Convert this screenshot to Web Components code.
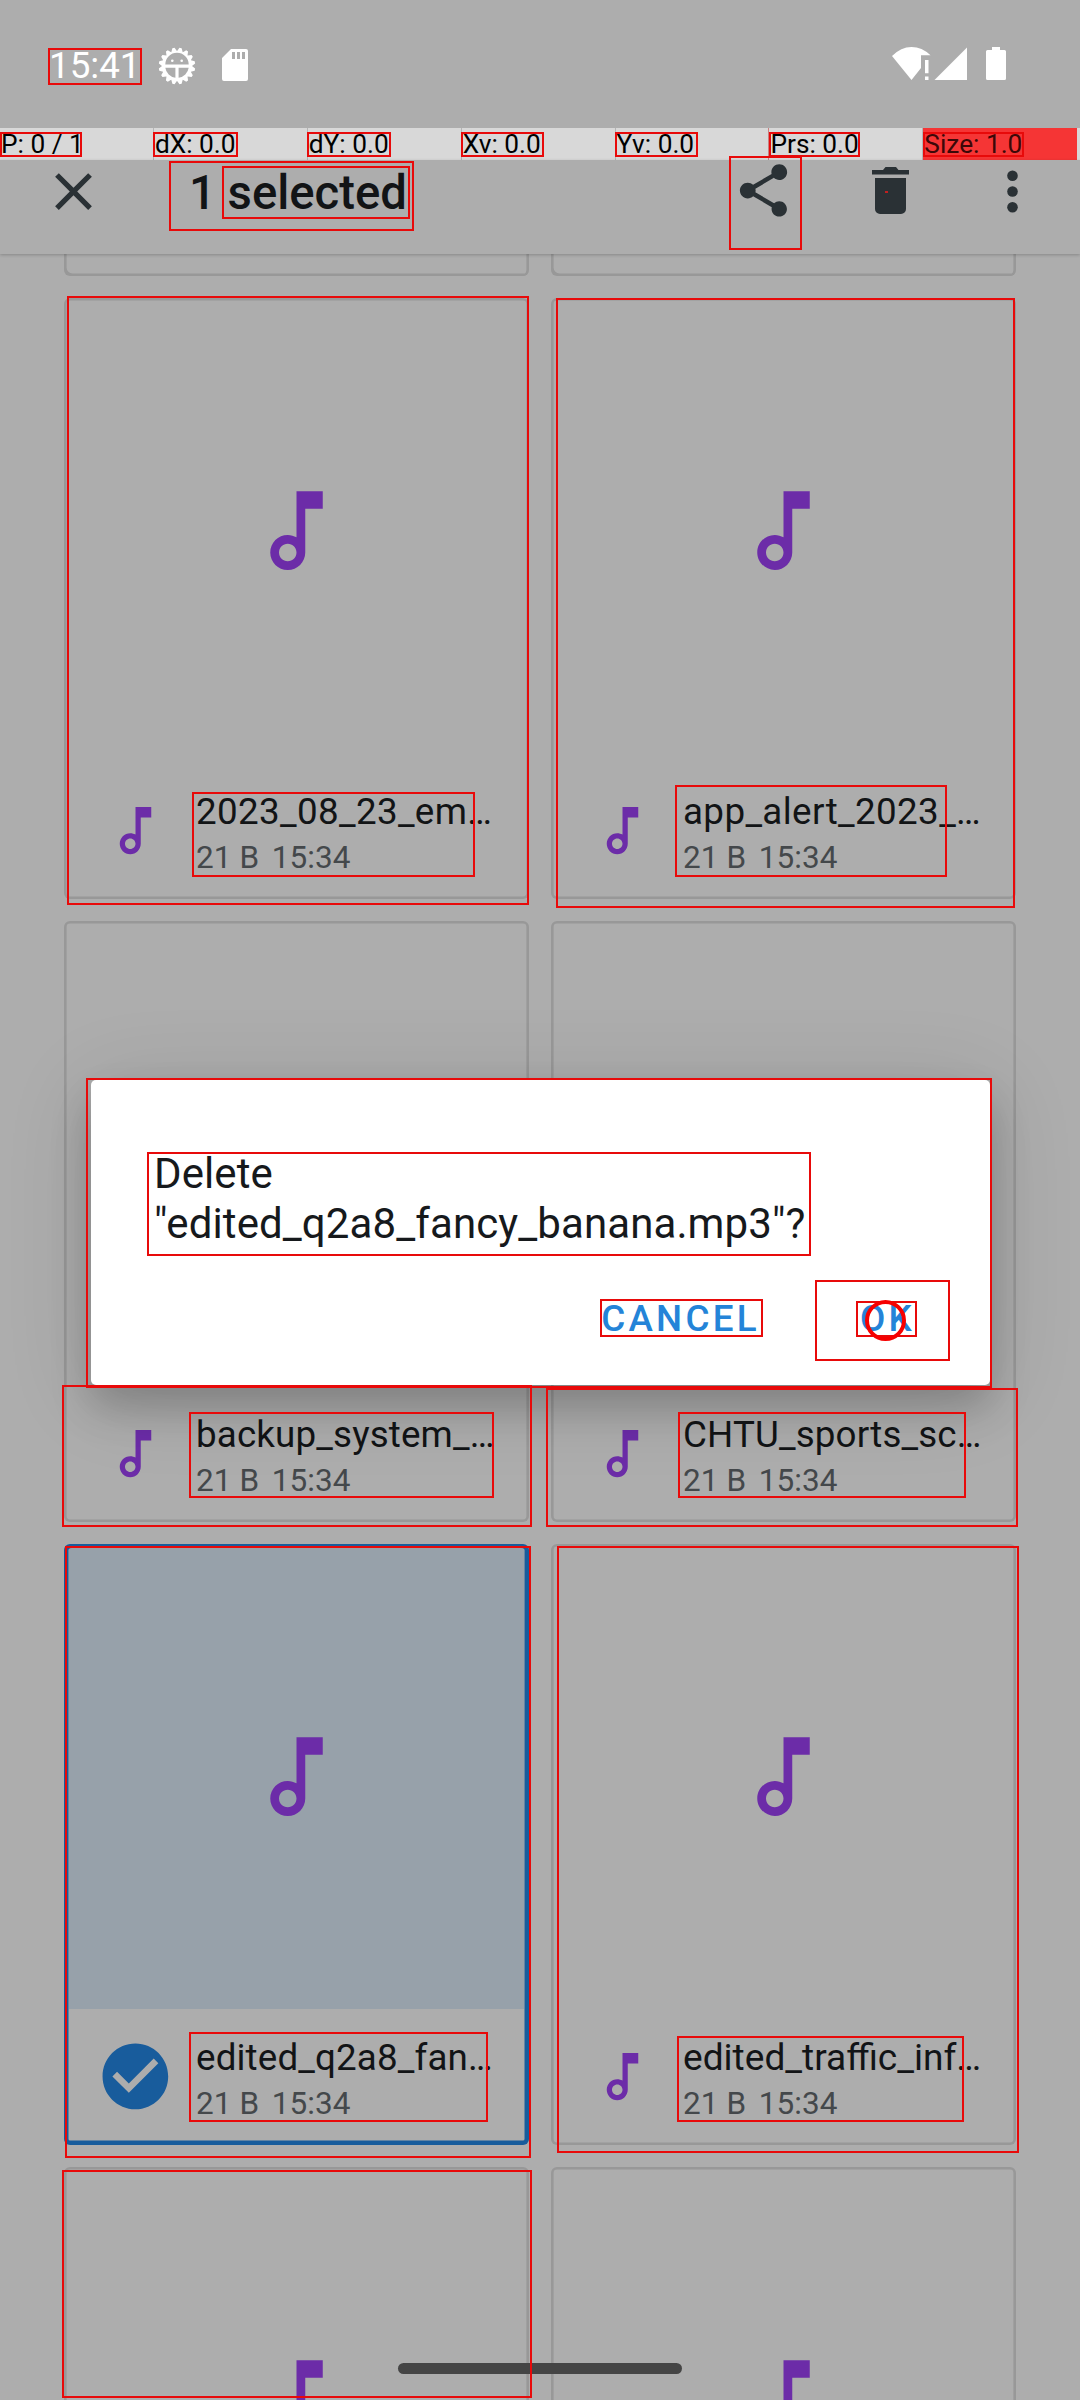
<!DOCTYPE html>
<html lang="en">
<head>
<meta charset="utf-8">
<title>Files</title>
<style>
html,body{margin:0;padding:0;width:1080px;height:2400px;overflow:hidden;background:#adadad}
</style>
</head>
<body>
<files-screen></files-screen>
<script>
const define = (name, html, ready) => {
  const t = document.createElement('template');
  t.innerHTML = html;
  customElements.define(name, class extends HTMLElement {
    connectedCallback() {
      if (this.shadowRoot) return;
      const root = this.attachShadow({ mode: 'open' });
      root.append(t.content.cloneNode(true));
      if (ready) ready(this, root);
    }
  });
};

define('status-bar', `
<style>
:host{display:flex;height:128px;box-sizing:border-box;padding:47px 74px 0 49px;align-items:flex-start;color:#fff}
.time{font-size:36.750px;line-height:38px;width:109px;margin-top:-.500px;white-space:nowrap}
svg{display:block;fill:#fff;flex:none}
.sp{flex:1}
</style>
<span class="time">15:41</span>
<svg class="gear" width="38" height="38" viewBox="-19 -19 38 38"></svg>
<svg style="margin:2px 0 0 26px" width="26" height="32" viewBox="0 0 26 32"><path fill-rule="evenodd" d="M9 0H24a2 2 0 0 1 2 2V30a2 2 0 0 1-2 2H2a2 2 0 0 1-2-2V9ZM10 3v7h3V3ZM15 3v7h3V3ZM20 3v7h3V3Z"/></svg>
<span class="sp"></span>
<svg width="114" height="33" viewBox="892 47 114 33">
<path d="M892 56Q901 47 911.500 47Q922 47 930.500 55.300H921V68L911.500 80Z"/>
<path d="M925 60h3.500v13.300h-3.500zM925 76.500h3.500v3.500h-3.500z"/>
<path d="M967 47.500V80H934.500Z"/>
<path d="M992 47h8v3h4.500a1.500 1.500 0 0 1 1.500 1.500V78.500a1.500 1.500 0 0 1-1.500 1.500H987.500a1.500 1.500 0 0 1-1.500-1.500V51.500a1.500 1.500 0 0 1 1.500-1.500H992Z"/>
</svg>`, (el, root) => {
  let d = '';
  const n = 16;
  for (let i = 0; i < n; i++) {
    const a = (i + .5) * 2 * Math.PI / n;
    const p = (r, o) => (r * Math.cos(a + o)).toFixed(2) + ' ' + (r * Math.sin(a + o)).toFixed(2);
    d += (i ? 'L' : 'M') + p(15, -.19) + 'L' + p(18.3, -.06) + 'L' + p(18.3, .06) + 'L' + p(15, .19);
  }
  root.querySelector('.gear').innerHTML =
    `<path fill-rule="evenodd" d="${d}ZM-11.700 -1.500A11.700 11.700 0 0 1 11.700 -1.500ZM-11.700 1.800H-1.600V11.700A11.700 11.700 0 0 1 -11.700 1.800ZM1.600 1.800H11.700A11.700 11.700 0 0 1 1.600 11.700Z"/><circle cx="-4.700" cy="-5.200" r="1.300"/><circle cx="4.700" cy="-5.200" r="1.300"/>`;
});

define('pointer-bar', `
<style>
:host{display:grid;grid-template-columns:repeat(6,153.900px) 1fr;height:32px;background:#d8d8d8;font-size:26.250px;line-height:33px;color:#000}
div{white-space:nowrap;padding-left:1px;box-sizing:border-box;height:32px;border-right:1px solid #b4b4b4}
div.p{border-right-color:#c98080}
div.s{background:#f53535;border:0;margin-right:3px;color:#3c0808}
</style>
<div>P: 0 / 1</div><div>dX: 0.0</div><div>dY: 0.0</div><div>Xv: 0.0</div><div class="p">Yv: 0.0</div><div>Prs: 0.0</div><div class="s">Size: 1.0</div>`);

define('app-bar', `
<style>
:host{display:flex;height:94px;background:#adadad;box-shadow:0 1px 3px rgba(0,0,0,.22);position:relative;z-index:1;color:#121416;box-sizing:border-box;padding:0 56px 0 42px}
svg{fill:#2a3135;flex:none;display:block}
h1{font-size:47.250px;font-weight:500;line-height:55px;margin:6px 0 0 84px;flex:1;white-space:nowrap}
</style>
<svg width="63" height="63" viewBox="0 0 24 24"><path d="M19 6.410L17.590 5 12 10.590 6.410 5 5 6.410 10.590 12 5 17.590 6.410 19 12 13.410 17.590 19 19 17.590 13.410 12z"/></svg>
<h1>1 selected</h1>
<svg style="margin:-1px 64px 0 0" width="63" height="63" viewBox="0 0 24 24"><path d="M18 16.080c-.760 0-1.440.3-1.960.770L8.910 12.700c.050-.230.090-.460.090-.7s-.040-.470-.090-.7l7.050-4.110c.540.5 1.250.810 2.040.810 1.660 0 3-1.340 3-3s-1.340-3-3-3-3 1.340-3 3c0 .240.040.470.090.7L8.040 9.810C7.500 9.310 6.790 9 6 9c-1.660 0-3 1.340-3 3s1.340 3 3 3c.790 0 1.500-.310 2.040-.810l7.120 4.160c-.050.210-.080.430-.080.650 0 1.610 1.310 2.920 2.920 2.920s2.920-1.310 2.920-2.920-1.310-2.920-2.920-2.920z"/></svg>
<svg style="margin-right:80px" width="63" height="63" viewBox="859 160 63 63"><path d="M872 170H883L885.500 167H896L898.500 170H909V174.500H872ZM875 178H906V209a5 5 0 0 1-5 5H880a5 5 0 0 1-5-5Z"/></svg>
<svg width="22" height="63" viewBox="1002 160 22 63"><circle cx="1012.500" cy="175.700" r="5.300"/><circle cx="1012.500" cy="191.500" r="5.300"/><circle cx="1012.500" cy="207.300" r="5.300"/></svg>`);

const NOTE = '<path fill="#6c2ca8" d="M12 3v10.550c-.590-.340-1.270-.550-2-.550C7.790 13 6 14.790 6 17s1.790 4 4 4 4-1.790 4-4V7h4V3h-6zm-2 16c-1.100 0-2-.9-2-2s.9-2 2-2 2 .9 2 2-.9 2-2 2z"/>';
define('file-card', `
<style>
:host{display:block;width:465px;height:601px;box-sizing:border-box;border-radius:6px;box-shadow:inset 0 0 0 2.600px #989898;overflow:hidden}
:host([selected]){box-shadow:inset 0 0 0 4.500px #185c9c}
:host([tail]){height:22px;border-radius:0 0 6px 6px;box-shadow:inset 2.600px -2.600px 0 #989898,inset -2.600px 0 0 #989898}
:host([tail]) *{display:none}
.thumb{height:465px;display:grid;place-items:center}
:host([selected]) .thumb{background:#97a1aa;margin:4px 5px 0;height:461px;border-radius:3px 3px 0 0}
:host([selected]) .thumb svg{margin-top:-4px}
.row{display:flex;align-items:center;height:135px}
.ic{width:79px;margin-left:32px;display:grid;place-items:center;flex:none}
.ic .ck{display:none}
:host([selected]) .ic .ck{display:block}
:host([selected]) .ic .nt{display:none}
.tx{margin:11px 0 0 21px;white-space:nowrap;display:flex;flex-direction:column}
.name{font-size:var(--name-size,36.750px);line-height:44px;color:#121416;letter-spacing:var(--name-ls,.150px)}
.meta{font-size:31.500px;line-height:48px;color:#44484b;letter-spacing:.100px}
::slotted([slot=time]){margin-left:4.500px}
</style>
<div class="thumb"><svg width="105" height="105" viewBox="0 0 24 24">${NOTE}</svg></div>
<div class="row"><div class="ic"><svg class="nt" width="63" height="63" viewBox="0 0 24 24">${NOTE}</svg><svg class="ck" width="78.750" height="78.750" viewBox="0 0 24 24"><path fill="#185c9c" d="M12 2C6.480 2 2 6.480 2 12s4.480 10 10 10 10-4.480 10-10S17.520 2 12 2zm-2 15l-5-5 1.410-1.410L10 14.170l7.590-7.590L19 8l-9 9z"/></svg></div>
<div class="tx"><span class="name"><slot></slot></span><span class="meta"><slot name="size"></slot> <slot name="time"></slot></span></div></div>`);

define('file-grid', `
<style>
:host{display:grid;grid-template-columns:465px 465px;column-gap:22px;row-gap:22px;padding-left:64px;height:2146px;overflow:hidden;align-content:start}
</style><slot></slot>`);

define('confirm-dialog', `
<style>
:host{position:absolute;left:91px;top:1080px;width:899px;height:305px;background:#fff;border-radius:5px;box-sizing:border-box;padding:69px 63px 0;z-index:2;display:flex;flex-direction:column;box-shadow:0 22px 42px rgba(0,0,0,.2),0 10px 90px rgba(0,0,0,.12)}
p{margin:0;font-size:42px;line-height:49.500px;color:#16191c;letter-spacing:.100px;white-space:nowrap}
.act{display:flex;justify-content:flex-end;gap:100px;margin-top:49px;padding-right:12px;font-weight:500;font-size:36.750px;line-height:44px;letter-spacing:3.280px;color:#2484d8}
</style>
<p><slot></slot></p>
<div class="act"><span>CANCEL</span><span>OK</span></div>`);

define('nav-pill', `
<style>:host{position:absolute;left:398px;top:2363px;width:284px;height:11px;border-radius:6px;background:#454545;z-index:3}</style>`);

define('layout-marks', `
<style>
:host{position:absolute;inset:0;z-index:4;pointer-events:none}
i{position:absolute;box-sizing:border-box;border:2px solid #e80a0a}
i.dot{border:0;background:#c02020}
i.ring{border:4px solid #f60000;border-radius:50%}
</style>`, (el, root) => {
  const boxes = [
    [48,48,142,85],[0,132,82,157],[153,132,238,157],[307,132,391,157],[461,132,544,157],[615,132,698,157],[769,132,860,157],[923,132,1024,157],
    [169,161,414,231],[222,166,410,219],[729,156,802,250],
    [67,296,529,905],[556,298,1015,908],[192,792,475,877],[675,785,947,877],
    [86,1078,992,1388],[147,1152,811,1256],[600,1299,763,1337],[815,1280,950,1361],[856,1301,917,1337],
    [62,1385,532,1527],[546,1388,1018,1527],[189,1412,494,1498],[678,1412,966,1498],
    [65,1546,531,2158],[557,1546,1019,2153],[189,2032,488,2122],[677,2036,964,2122],[62,2170,532,2398],
    [885,191,888,193,'dot'],[865,1300,906,1341,'ring']];
  for (const [a, b, c, d, k] of boxes) {
    const i = document.createElement('i');
    if (k) i.className = k;
    i.style.cssText = `left:${a}px;top:${b}px;width:${c - a}px;height:${d - b}px`;
    root.append(i);
  }
});

const META = '<span slot="size">21 B</span><span slot="time">15:34</span>';
define('files-screen', `
<style>
:host{display:block;position:relative;width:1080px;height:2400px;overflow:hidden;background:#adadad;font-family:Roboto,sans-serif}
</style>
<status-bar></status-bar>
<pointer-bar></pointer-bar>
<app-bar></app-bar>
<file-grid>
<file-card tail></file-card><file-card tail></file-card>
<file-card style="--name-ls:.35px">2023_08_23_em…${META}</file-card>
<file-card style="--name-ls:.38px">app_alert_2023_…${META}</file-card>
<file-card>backup_system_…${META}</file-card>
<file-card>CHTU_sports_sc…${META}</file-card>
<file-card selected>edited_q2a8_fan…${META}</file-card>
<file-card style="--name-ls:normal;--name-size:37.100px">edited_traffic_inf…${META}</file-card>
<file-card></file-card><file-card></file-card>
</file-grid>
<confirm-dialog>Delete<br>"edited_q2a8_fancy_banana.mp3"?</confirm-dialog>
<nav-pill></nav-pill>
<layout-marks></layout-marks>`);
</script>
</body>
</html>
